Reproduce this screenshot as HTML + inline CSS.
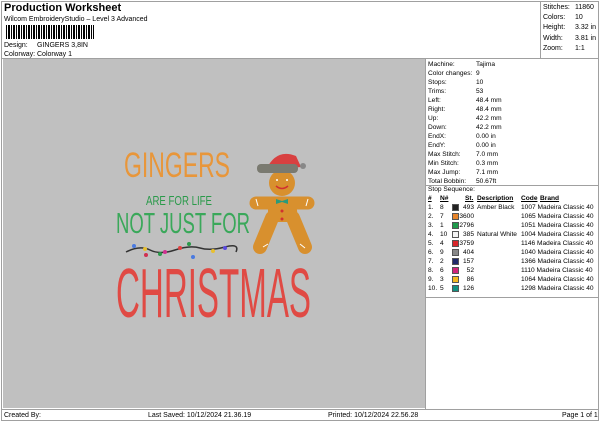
<!DOCTYPE html>
<html><head><meta charset="utf-8"><style>
*{margin:0;padding:0;box-sizing:border-box}
body{width:600px;height:424px;background:#fff;font-family:"Liberation Sans",Arial,sans-serif;font-size:7px;color:#000;position:relative;overflow:hidden}
.a{position:absolute;white-space:nowrap}
.p{font-size:6.6px}
.frame{position:absolute;left:1px;top:1px;width:598px;height:420px;border:1px solid #a0a0a0}
.bc{position:absolute;left:6px;top:25px;height:14px;width:88px;background:repeating-linear-gradient(90deg,#000 0 1px,#fff 1px 2px,#000 2px 4px,#fff 4px 5px)}
</style></head><body>
<div class="frame"></div>
<div class="a" style="left:4px;top:2px;font-size:11px;font-weight:bold">Production Worksheet</div>
<div class="a" style="left:4px;top:16px">Wilcom EmbroideryStudio – Level 3 Advanced</div>
<div class="bc"></div>
<div class="a" style="left:4px;top:42px">Design:</div><div class="a" style="left:37px;top:42px">GINGERS 3,8IN</div>
<div class="a" style="left:4px;top:51px">Colorway:</div><div class="a" style="left:37px;top:51px">Colorway 1</div>
<div style="position:absolute;left:540px;top:1px;width:1px;height:58px;background:#a0a0a0"></div>
<div class="a" style="left:543px;top:3px;line-height:10.2px">Stitches:<br>Colors:<br>Height:<br>Width:<br>Zoom:</div>
<div class="a" style="left:575px;top:3px;line-height:10.2px">11860<br>10<br>3.32 in<br>3.81 in<br>1:1</div>
<div style="position:absolute;left:1px;top:58px;width:598px;height:1px;background:#a0a0a0"></div>
<div style="position:absolute;left:3px;top:59px;width:422px;height:349px;background:#c0c0c0"></div>
<div style="position:absolute;left:425px;top:59px;width:1px;height:350px;background:#a0a0a0"></div>
<div class="a p" style="left:428px;top:60px;line-height:9px">Machine:<br>Color changes:<br>Stops:<br>Trims:<br>Left:<br>Right:<br>Up:<br>Down:<br>EndX:<br>EndY:<br>Max Stitch:<br>Min Stitch:<br>Max Jump:<br>Total Bobbin:</div>
<div class="a p" style="left:476px;top:60px;line-height:9px">Tajima<br>9<br>10<br>53<br>48.4 mm<br>48.4 mm<br>42.2 mm<br>42.2 mm<br>0.00 in<br>0.00 in<br>7.0 mm<br>0.3 mm<br>7.1 mm<br>50.67ft</div>
<div style="position:absolute;left:426px;top:185px;width:173px;height:1px;background:#a0a0a0"></div>
<div class="a p" style="left:428px;top:186px">Stop Sequence:</div>
<div class="a p" style="left:428px;top:195px;font-weight:bold;text-decoration:underline">#</div>
<div class="a p" style="left:440px;top:195px;font-weight:bold;text-decoration:underline">N#</div>
<div class="a p" style="left:465px;top:195px;font-weight:bold;text-decoration:underline">St.</div>
<div class="a p" style="left:477px;top:195px;font-weight:bold;text-decoration:underline">Description</div>
<div class="a p" style="left:521px;top:195px;font-weight:bold;text-decoration:underline">Code</div>
<div class="a p" style="left:540px;top:195px;font-weight:bold;text-decoration:underline">Brand</div>
<div class="a p" style="left:428px;top:203px;line-height:9px">1.<br>2.<br>3.<br>4.<br>5.<br>6.<br>7.<br>8.<br>9.<br>10.</div>
<div class="a p" style="left:440px;top:203px;line-height:9px">8<br>7<br>1<br>10<br>4<br>9<br>2<br>6<br>3<br>5</div>
<div class="a p" style="left:452px;top:203px;line-height:9px;text-align:right;width:22px">493<br>3600<br>2796<br>385<br>3759<br>404<br>157<br>52<br>86<br>126</div>
<div class="a p" style="left:477px;top:203px;line-height:9px">Amber Black<br><br><br>Natural White</div>
<div class="a p" style="left:521px;top:203px;line-height:9px">1007 Madeira Classic 40<br>1065 Madeira Classic 40<br>1051 Madeira Classic 40<br>1004 Madeira Classic 40<br>1146 Madeira Classic 40<br>1040 Madeira Classic 40<br>1366 Madeira Classic 40<br>1110 Madeira Classic 40<br>1064 Madeira Classic 40<br>1298 Madeira Classic 40</div>
<svg class="a" style="left:452px;top:203px" width="8" height="90">
<rect x="0.5" y="1.5" width="6" height="6" fill="#222" stroke="#555"/>
<rect x="0.5" y="10.5" width="6" height="6" fill="#e8852a" stroke="#555"/>
<rect x="0.5" y="19.5" width="6" height="6" fill="#1e9a4a" stroke="#555"/>
<rect x="0.5" y="28.5" width="6" height="6" fill="#f4f4f4" stroke="#555"/>
<rect x="0.5" y="37.5" width="6" height="6" fill="#d8262a" stroke="#555"/>
<rect x="0.5" y="46.5" width="6" height="6" fill="#888" stroke="#555"/>
<rect x="0.5" y="55.5" width="6" height="6" fill="#1f2a6a" stroke="#555"/>
<rect x="0.5" y="64.5" width="6" height="6" fill="#d0247a" stroke="#555"/>
<rect x="0.5" y="73.5" width="6" height="6" fill="#f4b820" stroke="#555"/>
<rect x="0.5" y="82.5" width="6" height="6" fill="#139080" stroke="#555"/>
</svg>
<div style="position:absolute;left:426px;top:297px;width:173px;height:1px;background:#a0a0a0"></div>
<div style="position:absolute;left:1px;top:409px;width:598px;height:1px;background:#a0a0a0"></div>
<div class="a" style="left:4px;top:412px">Created By:</div>
<div class="a" style="left:148px;top:412px">Last Saved: 10/12/2024 21.36.19</div>
<div class="a" style="left:328px;top:412px">Printed: 10/12/2024 22.56.28</div>
<div class="a" style="left:562px;top:412px">Page 1 of 1</div>
<svg class="a" style="left:0;top:0" width="600" height="424">
<g font-family="Liberation Sans Narrow, Liberation Sans, sans-serif">
<text x="124" y="177" font-size="35" fill="#e8963a" textLength="106" lengthAdjust="spacingAndGlyphs">GINGERS</text>
<text x="146" y="205" font-size="13" fill="#2a9a4a" textLength="66" lengthAdjust="spacingAndGlyphs">ARE FOR LIFE</text>
<text x="116" y="233" font-size="29" fill="#3aa85a" textLength="134" lengthAdjust="spacingAndGlyphs">NOT JUST FOR</text>
<text x="116" y="317" font-size="70" fill="#e04a44" textLength="195" lengthAdjust="spacingAndGlyphs">CHRISTMAS</text>
</g>
<path d="M126 252 Q140 245 150 250 T175 250 T200 248 T225 247 T236 252" stroke="#333" stroke-width="1.5" fill="none"/>
<g><circle cx="134" cy="246" r="2" fill="#4a7ae0"/><circle cx="145" cy="249" r="2" fill="#e8c030"/><circle cx="146" cy="255" r="2" fill="#d03050"/><circle cx="160" cy="254" r="2" fill="#2a9a4a"/><circle cx="165" cy="252" r="2" fill="#d03090"/><circle cx="180" cy="248" r="2" fill="#e04040"/><circle cx="189" cy="244" r="2" fill="#2a9a4a"/><circle cx="193" cy="257" r="2" fill="#4a7ae0"/><circle cx="213" cy="251" r="2" fill="#e8c030"/><circle cx="225" cy="248" r="2" fill="#5a4ae0"/></g>
<g fill="#d8902e" stroke="#d8902e" stroke-linecap="round">
<circle cx="282" cy="183" r="13" stroke="none"/>
<line x1="256" y1="203" x2="308" y2="203" stroke-width="13"/>
<path d="M268 198 L296 198 L298 222 L268 222 Z" stroke="none"/>
<line x1="272" y1="218" x2="260" y2="247" stroke-width="14"/>
<line x1="293" y1="218" x2="305" y2="247" stroke-width="14"/>
</g>
<path d="M263 247 L268 244 M300 244 L305 248 M256 199 L258 206 M308 199 L306 206" stroke="#fff" stroke-width="1"/>
<path d="M266 170 Q276 148 296 156 L301 167 Z" fill="#d84040"/>
<rect x="257" y="164" width="41" height="9" rx="4" fill="#7a7a70"/>
<circle cx="303" cy="166" r="3" fill="#888"/>
<circle cx="277" cy="180" r="1" fill="#fff"/><circle cx="287" cy="180" r="1" fill="#fff"/>
<path d="M276 186 Q282 191 288 186" stroke="#d03030" stroke-width="1.5" fill="none"/>
<path d="M276 199 L282 201 L288 199 L288 204 L282 202 L276 204Z" fill="#2a9a7a"/>
<circle cx="282" cy="211" r="1.5" fill="#d03030"/><circle cx="282" cy="219" r="1.5" fill="#d03030"/>
</svg>
</body></html>
